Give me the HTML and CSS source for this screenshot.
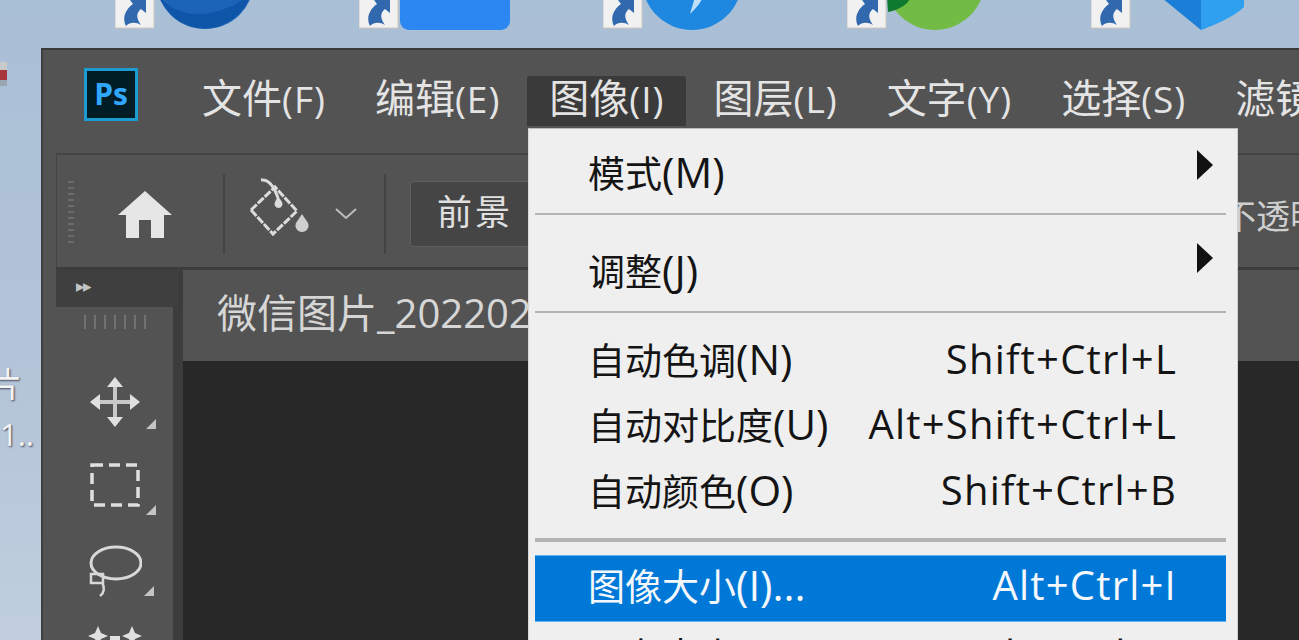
FILE: index.html
```html
<!DOCTYPE html>
<html lang="zh-CN">
<head>
<meta charset="UTF-8" />
<meta name="viewport" content="width=device-width, initial-scale=1" />
<title>Photoshop 图像菜单</title>
<link rel="stylesheet" href="styles.css">
</head>
<body>

<div class="desk-icons">
  <svg class="desk-icon" width="200" height="32" viewBox="0 0 200 32">
    <rect class="tile" x="0" y="-6" width="39" height="34"/>
    <path class="tile-arrow" d="M11 26 C7 18 10 10 18 4 L15 0 L31 -3 L31 13 L26 9 C21 13 21 18 26 25 C21 22 15 22 11 26 Z"/>
    <circle cx="90" cy="-20" r="49" fill="#1c64b8"/>
    <path d="M42 -8 C58 20 100 22 136 -6 C122 36 62 44 42 -8 Z" fill="#0f56a8"/>
  </svg>
  <svg class="desk-icon" width="200" height="32" viewBox="0 0 200 32">
    <rect class="tile" x="0" y="-6" width="39" height="34"/>
    <path class="tile-arrow" d="M11 26 C7 18 10 10 18 4 L15 0 L31 -3 L31 13 L26 9 C21 13 21 18 26 25 C21 22 15 22 11 26 Z"/>
    <rect x="41" y="-20" width="110" height="50" rx="9" fill="#2c87f2"/>
  </svg>
  <svg class="desk-icon" width="200" height="32" viewBox="0 0 200 32">
    <rect class="tile" x="0" y="-6" width="39" height="34"/>
    <path class="tile-arrow" d="M11 26 C7 18 10 10 18 4 L15 0 L31 -3 L31 13 L26 9 C21 13 21 18 26 25 C21 22 15 22 11 26 Z"/>
    <circle cx="89" cy="-20" r="50" fill="#1e88e0"/>
    <path d="M87 14 C92 9 97 4 100 -3 L92 -3 Z" fill="#bfe0f8"/>
  </svg>
  <svg class="desk-icon" width="200" height="32" viewBox="0 0 200 32">
    <rect class="tile" x="0" y="-6" width="39" height="34"/>
    <path class="tile-arrow" d="M11 26 C7 18 10 10 18 4 L15 0 L31 -3 L31 13 L26 9 C21 13 21 18 26 25 C21 22 15 22 11 26 Z"/>
    <circle cx="88" cy="-20" r="50" fill="#72bc45"/>
    <path d="M40 -4 L64 -4 C62 4 52 10 41 12 Z" fill="#0d7a2f"/>
  </svg>
  <svg class="desk-icon" width="200" height="32" viewBox="0 0 200 32">
    <rect class="tile" x="0" y="-6" width="39" height="34"/>
    <path class="tile-arrow" d="M11 26 C7 18 10 10 18 4 L15 0 L31 -3 L31 13 L26 9 C21 13 21 18 26 25 C21 22 15 22 11 26 Z"/>
    <path d="M71 -2 L110 30 L110 -2 Z" fill="#1b7fd8"/>
    <path d="M110 -2 L110 30 C116 28 142 18 153 7 L153 -2 Z" fill="#2fa0ef"/>
  </svg>
</div>

<!-- bits of other desktop items beside the window -->
<div class="desk-stub"></div>
<div class="desk-label desk-label-a">图片</div>
<div class="desk-label desk-label-b">1..</div>

<div class="ps-window">

  <div class="menubar">
    <div class="ps-logo">Ps</div>
    <div class="menubar-items">
      <span class="menubar-item">文件<small>(F)</small></span>
      <span class="menubar-item">编辑<small>(E)</small></span>
      <span class="menubar-item active">图像<small>(I)</small></span>
      <span class="menubar-item">图层<small>(L)</small></span>
      <span class="menubar-item">文字<small>(Y)</small></span>
      <span class="menubar-item">选择<small>(S)</small></span>
      <span class="menubar-item">滤镜<small>(T)</small></span>
    </div>
  </div>

  <div class="options">
    <div class="grip"></div>
    <svg class="home-icon" width="56" height="48" viewBox="0 0 56 48">
      <path d="M28 1 L55 25 L47 25 L47 48 L34 48 L34 30 L22 30 L22 48 L9 48 L9 25 L1 25 Z" fill="#e6e6e6"/>
    </svg>
    <div class="opt-sep"></div>
    <svg class="bucket-icon" width="62" height="60" viewBox="0 0 62 60">
      <path d="M3 32 L27 9 L49 33 L25 56 Z" fill="none" stroke="#dcdcdc" stroke-width="3" stroke-dasharray="8 1.5"/>
      <path d="M13 2 C20 1 26 8 30 20" fill="none" stroke="#dcdcdc" stroke-width="3"/>
      <path d="M30 18 L34 24 A4 4 0 1 1 27 24 Z" fill="#dcdcdc"/>
      <path d="M54 36 L60 45 A6.500 6.500 0 1 1 48 45 Z" fill="#cfcfcf"/>
    </svg>
    <svg class="chevron" width="22" height="12" viewBox="0 0 22 12">
      <path d="M1 1 L11 10 L21 1" fill="none" stroke="#bdbdbd" stroke-width="2"/>
    </svg>
    <div class="opt-sep"></div>
    <div class="opt-box">前景</div>
    <div class="opt-label">不透明度:</div>
  </div>

  <div class="workspace">
    <div class="toolbar">
      <div class="toolbar-head"><span class="collapse">▸▸</span></div>
      <div class="toolbar-panel">
        <div class="toolbar-grip"></div>
        <div class="tool tool-move">
          <svg width="50" height="50" viewBox="0 0 50 50">
            <path d="M25 3 V47 M3 25 H47" stroke="#c8c8c8" stroke-width="4"/>
            <path d="M25 0 L33 10 H17 Z M25 50 L33 40 H17 Z M0 25 L10 17 V33 Z M50 25 L40 17 V33 Z" fill="#e0e0e0"/>
          </svg>
        </div>
        <div class="tool">
          <svg width="50" height="44" viewBox="0 0 50 44">
            <rect x="2" y="2" width="46" height="40" fill="none" stroke="#e0e0e0" stroke-width="3.500" stroke-dasharray="11 6"/>
          </svg>
        </div>
        <div class="tool tool-lasso">
          <svg width="54" height="54" viewBox="0 0 54 54">
            <ellipse cx="28" cy="19" rx="25" ry="16" fill="none" stroke="#d8d8d8" stroke-width="3"/>
            <rect x="3" y="30" width="12" height="9" fill="none" stroke="#d8d8d8" stroke-width="2.500"/>
            <path d="M14 38 C17 44 16 49 12 52" fill="none" stroke="#d8d8d8" stroke-width="2.500"/>
          </svg>
        </div>
        <div class="tool">
          <svg width="54" height="30" viewBox="0 0 54 30">
            <path d="M10 0 L13 7 L20 10 L13 13 L10 20 L7 13 L0 10 L7 7 Z M44 0 L47 7 L54 10 L47 13 L44 20 L41 13 L34 10 L41 7 Z" fill="#e0e0e0"/>
            <rect x="22" y="10" width="10" height="14" fill="#e0e0e0"/>
          </svg>
        </div>
      </div>
    </div>
    <div class="doc">
      <div class="doc-tab">微信图片_20220216</div>
      <div class="doc-canvas"></div>
    </div>
  </div>
</div>

<div class="menu">
  <div class="menu-item menu-item-first"><span>模式<small>(M)</small></span><span class="submenu-arrow"></span></div>
  <div class="menu-sep"></div>
  <div class="menu-item menu-item-second"><span>调整<small>(J)</small></span><span class="submenu-arrow arrow-high"></span></div>
  <div class="menu-sep"></div>
  <div class="menu-group">
    <div class="menu-item"><span>自动色调<small>(N)</small></span><span class="shortcut">Shift+Ctrl+L</span></div>
    <div class="menu-item"><span>自动对比度<small>(U)</small></span><span class="shortcut">Alt+Shift+Ctrl+L</span></div>
    <div class="menu-item"><span>自动颜色<small>(O)</small></span><span class="shortcut">Shift+Ctrl+B</span></div>
  </div>
  <div class="menu-sep menu-sep-thick"></div>
  <div class="menu-item selected"><span>图像大小<small>(I)...</small></span><span class="shortcut">Alt+Ctrl+I</span></div>
  <div class="menu-item"><span>画布大小<small>(S)...</small></span><span class="shortcut">Alt+Ctrl+C</span></div>
</div>

</body>
</html>
```

FILE: styles.css
```css
html, body {
  height: 100%;
}
body {
  margin: 0;
  overflow: hidden;
  position: relative;
  background: linear-gradient(180deg, #a9bfd6 0%, #b3c4d8 55%, #c0cede 100%);
  font-family: "Open Sans", "Noto Sans CJK SC", sans-serif;
}

.desk-icons {
  display: flex;
  gap: 44px;
  padding-left: 115px;
}
.desk-icon {
  display: block;
  flex: none;
}
.tile {
  fill: #f1f1f1;
  stroke: #cfc8c0;
}
.tile-arrow {
  fill: #3268ae;
}

.desk-stub {
  position: absolute;
  left: 0;
  top: 62px;
  width: 7px;
  height: 24px;
  background: linear-gradient(180deg, #c9c9c9 0 35%, #a8353c 35% 75%, #9aa6b4 75%);
}
.desk-label {
  position: absolute;
  color: #f4f4f4;
  font-size: 34px;
  line-height: 40px;
  text-shadow: 1px 1px 2px #445;
}
.desk-label-a {
  left: -46px;
  top: 364px;
}
.desk-label-b {
  left: 0;
  top: 414px;
  font-size: 31px;
}

.ps-window {
  position: absolute;
  left: 41px;
  top: 48px;
  right: 0;
  bottom: 0;
  background: #535353;
  border-top: 2px solid #3a3a3a;
  border-left: 2px solid #3f3f3f;
  box-sizing: border-box;
  display: flex;
  flex-direction: column;
  overflow: hidden;
}

.menubar {
  height: 103px;
  display: flex;
  align-items: flex-start;
  flex: none;
}
.ps-logo {
  box-sizing: border-box;
  width: 54px;
  height: 53px;
  margin: 18px 0 0 41px;
  border: 3px solid #1c9bd0;
  background: #001d26;
  color: #31a8ff;
  font-family: "Open Sans", sans-serif;
  font-weight: 700;
  font-size: 30px;
  line-height: 45px;
  text-align: center;
  flex: none;
}
.menubar-items {
  display: flex;
  margin-left: 42px;
  margin-top: 26px;
  gap: 5px;
  white-space: nowrap;
}
.menubar-item {
  padding: 0 22px;
  height: 50px;
  line-height: 44px;
  font-size: 40px;
  color: #e4e4e4;
}
.menubar-item small {
  font-size: 37px;
  letter-spacing: 1px;
}
.menubar-item.active {
  background: #3a3a3a;
  border-radius: 3px 3px 0 0;
}

.options {
  height: 114px;
  margin-left: 13px;
  padding-top: 6px;
  display: flex;
  align-items: center;
  flex: none;
  border-top: 2px solid #444;
  border-left: 1px solid #444;
  box-sizing: border-box;
  white-space: nowrap;
}
.grip {
  width: 6px;
  height: 66px;
  margin-left: 11px;
  background: repeating-linear-gradient(180deg, #6b6b6b 0 2px, transparent 2px 6px);
  flex: none;
}
.home-icon {
  margin-left: 43px;
  flex: none;
}
.opt-sep {
  width: 2px;
  height: 80px;
  background: #434343;
  flex: none;
}
.home-icon + .opt-sep {
  margin-left: 50px;
}
.bucket-icon {
  margin-left: 23px;
  margin-bottom: 12px;
  flex: none;
}
.chevron {
  margin-left: 25px;
  margin-right: 27px;
  flex: none;
}
.chevron + .opt-sep {
  margin-right: 24px;
}
.opt-box {
  flex: none;
  box-sizing: border-box;
  width: 400px;
  height: 66px;
  padding-left: 26px;
  background: #454545;
  border: 1px solid #5e5e5e;
  border-radius: 4px;
  color: #e0e0e0;
  font-size: 35px;
  letter-spacing: 3px;
  line-height: 60px;
}
.opt-label {
  flex: none;
  margin-left: 412px;
  color: #cfcfcf;
  font-size: 34px;
}

.workspace {
  flex: 1;
  min-height: 0;
  margin-left: 13px;
  display: flex;
  background: #3c3c3c;
  padding-top: 3px;
}
.toolbar {
  width: 122px;
  flex: none;
  display: flex;
  flex-direction: column;
}
.toolbar-head {
  height: 37px;
  background: #3f3f3f;
  color: #c4c4c4;
  font-size: 17px;
  line-height: 31px;
  padding-left: 20px;
  flex: none;
}
.collapse {
  letter-spacing: -2px;
}
.toolbar-panel {
  flex: 1;
  background: #535353;
  margin-right: 5px;
  display: flex;
  flex-direction: column;
  align-items: center;
}
.toolbar-grip {
  width: 62px;
  height: 14px;
  margin: 8px 0 48px 0;
  background: repeating-linear-gradient(90deg, #707070 0 2px, transparent 2px 10px);
}
.tool {
  position: relative;
  height: 84px;
  display: flex;
  align-items: flex-start;
  justify-content: center;
  flex: none;
}
.tool::after {
  content: "";
  position: absolute;
  left: 56px;
  top: 42px;
  border-style: solid;
  border-width: 0 0 10px 10px;
  border-color: transparent transparent #c4c4c4 transparent;
}
.tool-move {
  height: 86px;
}
.tool-lasso {
  height: 82px;
  margin-top: -3px;
}
.doc {
  flex: 1;
  min-width: 0;
  margin-left: 5px;
  display: flex;
  flex-direction: column;
}
.doc-tab {
  height: 91px;
  background: #535353;
  color: #d6d6d6;
  font-size: 40px;
  line-height: 86px;
  padding-left: 34px;
  white-space: nowrap;
  flex: none;
  overflow: hidden;
}
.doc-canvas {
  flex: 1;
  background: #282828;
}

.menu {
  position: absolute;
  left: 528px;
  top: 128px;
  width: 710px;
  box-sizing: border-box;
  padding: 0 11px 0 6px;
  background: #efefef;
  border-top: 1px solid #bcbcbc;
  border-left: 1px solid #d8d8d8;
  border-right: 1px solid #cfcfcf;
  color: #141414;
  font-size: 37px;
}
.menu-item {
  height: 65.5px;
  padding: 0 49px 0 53px;
  display: flex;
  align-items: center;
  justify-content: space-between;
  white-space: nowrap;
}
.menu-item small {
  font-size: 42px;
  line-height: 40px;
}
.menu-item-first {
  height: 84px;
  padding-top: 2px;
  box-sizing: border-box;
}
.menu-item-second {
  height: 96px;
  padding-top: 14px;
  box-sizing: border-box;
}
.submenu-arrow {
  width: 0;
  height: 0;
  margin-right: -36px;
  margin-bottom: 14px;
  border-style: solid;
  border-width: 15px 0 15px 16px;
  border-color: transparent transparent transparent #111;
}
.arrow-high {
  margin-bottom: 24px;
}
.menu-sep {
  height: 2px;
  background: #b4b4b4;
}
.menu-group {
  padding: 13px 0 3px;
}
.shortcut {
  font-size: 40px;
  line-height: 44px;
  letter-spacing: 1.200px;
}
.menu-sep-thick {
  height: 4px;
  margin: 12px 0 13px;
}
.menu-item.selected {
  height: 67px;
  box-sizing: border-box;
  padding-bottom: 6px;
  background: #0078d7;
  border-top: 1px solid #5cb4f0;
  border-bottom: 1px solid #5cb4f0;
  color: #f4f8fc;
}
```
